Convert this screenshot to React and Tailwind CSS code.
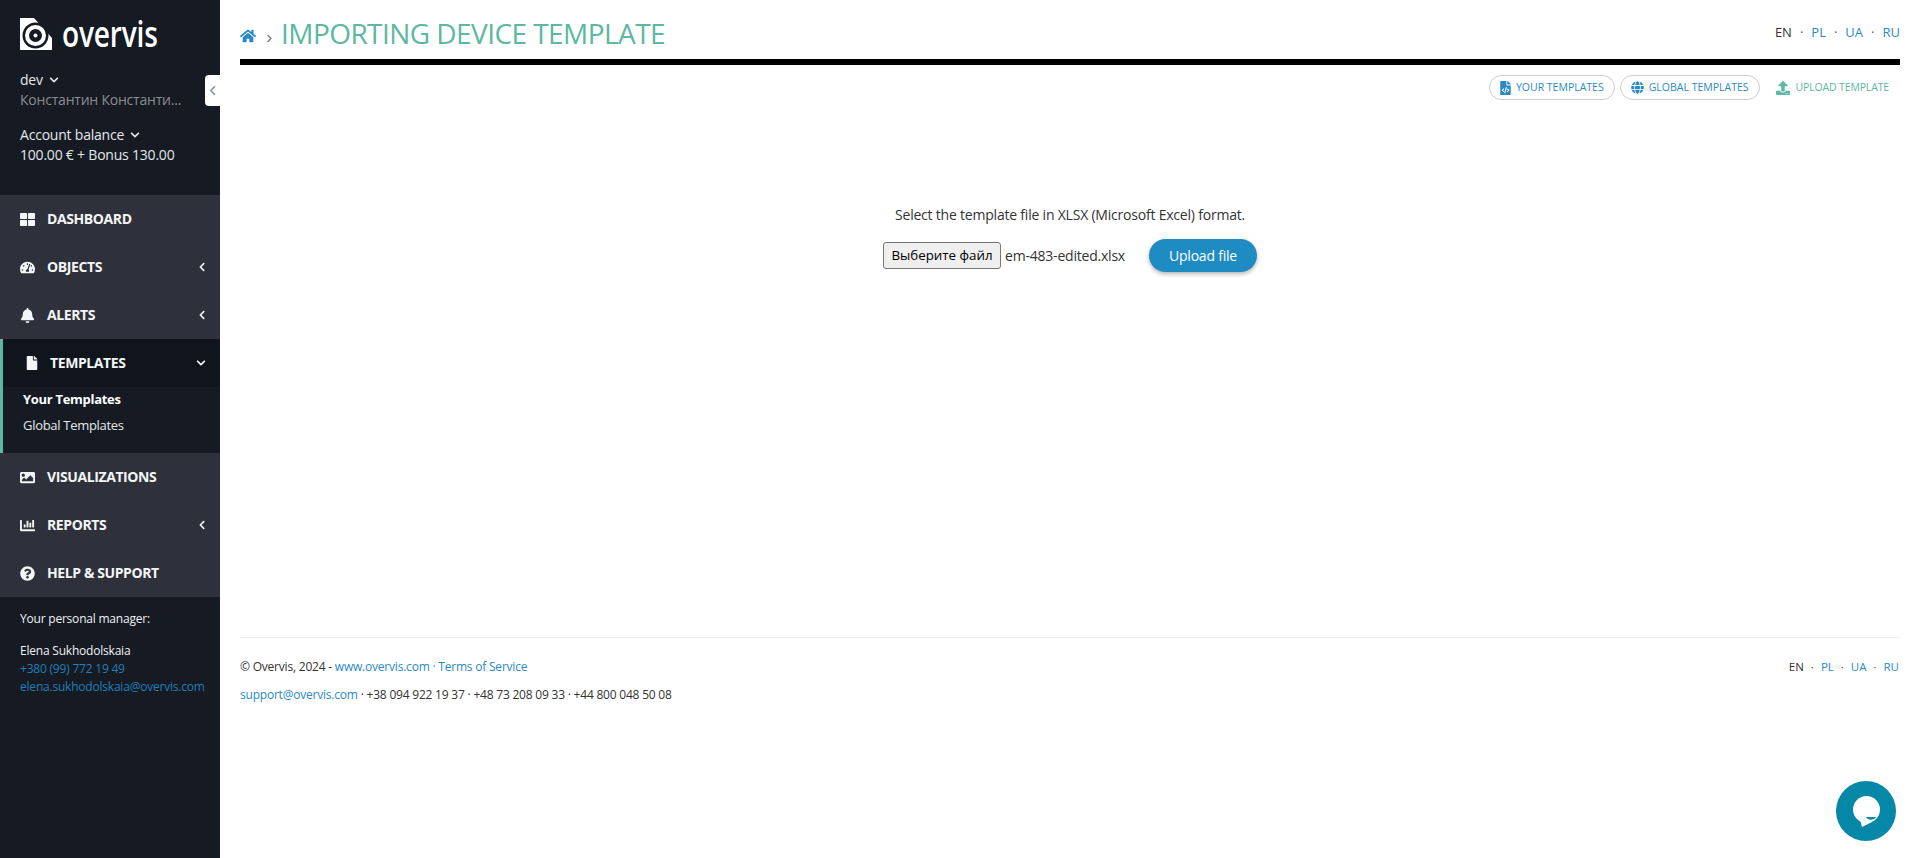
import React from 'react';
import {
  FaThLarge,
  FaTachometerAlt,
  FaBell,
  FaFile,
  FaImage,
  FaChartBar,
  FaQuestionCircle,
  FaHome,
  FaChevronDown,
  FaChevronLeft,
  FaChevronRight,
  FaFileCode,
  FaGlobe,
  FaUpload,
} from 'react-icons/fa';

const NavItem = ({ icon: Icon, label, arrow }) => (
  <div className="h-12 flex items-center pl-5 pr-[13px] text-[#f4f5f6]">
    <span className="w-[27px] flex items-center">
      <Icon className="text-[15px]" />
    </span>
    <span className="flex-1 text-sm font-bold uppercase tracking-[-0.4px]">{label}</span>
    {arrow && <FaChevronLeft className="text-[10px]" />}
  </div>
);

const Langs = ({ className, dotClass }) => (
  <div className={`flex items-center ${className}`}>
    <span className="text-[#333]">EN</span>
    <span className={`text-[#555] ${dotClass}`}>·</span>
    <a className="text-[#2a8ac6]">PL</a>
    <span className={`text-[#555] ${dotClass}`}>·</span>
    <a className="text-[#2a8ac6]">UA</a>
    <span className={`text-[#555] ${dotClass}`}>·</span>
    <a className="text-[#2a8ac6]">RU</a>
  </div>
);

const Logo = () => (
  <div className="flex items-center gap-[10px] text-white">
    <svg width="32" height="32" viewBox="0 0 32 32">
      <path d="M0 0H14L32 20V32H0Z" fill="#fff" />
      <circle cx="15.500" cy="17.500" r="13" fill="#151a23" />
      <circle cx="15.500" cy="17.500" r="10.500" fill="#fff" />
      <circle cx="15.500" cy="17.500" r="6.500" fill="#151a23" />
      <circle cx="15.500" cy="17.500" r="2" fill="#fff" />
    </svg>
    <span className="text-[36px] leading-8 font-semibold origin-left scale-x-[0.78]">overvis</span>
  </div>
);

const Sidebar = () => (
  <aside className="relative w-[220px] shrink-0 bg-[#151a23] text-sm text-[#e4e7ea]">
    <div className="h-[195px] pl-5 pt-[18px]">
      <Logo />
      <div className="mt-5 leading-5">
        <div className="flex items-center gap-[6px]">
          dev <FaChevronDown className="text-[10px]" />
        </div>
        <div className="text-[#8b8d90]">Константин Константи...</div>
      </div>
      <div className="mt-[15px] leading-5">
        <div className="flex items-center gap-[6px]">
          Account balance <FaChevronDown className="text-[10px]" />
        </div>
        <div>100.00 € + Bonus 130.00</div>
      </div>
    </div>

    <div className="absolute left-[205px] top-[75px] w-[15px] h-[31px] bg-white rounded-l flex items-center justify-center text-[#8c99a8]">
      <FaChevronLeft className="text-[11px]" />
    </div>

    <nav>
      <div className="bg-[#2e313b]">
        <NavItem icon={FaThLarge} label="Dashboard" />
        <NavItem icon={FaTachometerAlt} label="Objects" arrow />
        <NavItem icon={FaBell} label="Alerts" arrow />
      </div>
      <div className="border-l-[3px] border-[#5cb8a0]">
        <div className="h-12 flex items-center pl-[22px] pr-[14px] bg-[#10141c] text-[#f4f5f6]">
          <span className="w-[25px] flex items-center">
            <FaFile className="text-[14px]" />
          </span>
          <span className="flex-1 font-bold uppercase tracking-[-0.4px]">Templates</span>
          <FaChevronDown className="text-[10px]" />
        </div>
        <div className="h-[66px] flex flex-col pl-5 text-[13px] leading-[26px] tracking-[-0.3px]">
          <div className="-mt-px font-bold text-white">Your Templates</div>
          <div>Global Templates</div>
        </div>
      </div>
      <div className="bg-[#2e313b]">
        <NavItem icon={FaImage} label="Visualizations" />
        <NavItem icon={FaChartBar} label="Reports" arrow />
        <NavItem icon={FaQuestionCircle} label="Help & Support" />
      </div>
    </nav>

    <div className="pl-5 pt-[13px] text-xs leading-[18px] text-[#f0f1f2]">
      <div>Your personal manager:</div>
      <div className="mt-[14px]">Elena Sukhodolskaia</div>
      <a className="block text-[#1f7fba]">+380 (99) 772 19 49</a>
      <a className="block text-[#1f7fba]">elena.sukhodolskaia@overvis.com</a>
    </div>
  </aside>
);

const PillLink = ({ icon: Icon, iconClass, children }) => (
  <a className="h-[25px] flex items-center gap-[5px] px-[10px] rounded-full border border-[#ccc] text-[#2a8ac6] text-[10.5px] uppercase tracking-normal">
    <Icon className={`shrink-0 ${iconClass}`} />
    {children}
  </a>
);

export default function App() {
  return (
    <div className="min-h-screen flex bg-white text-[#333] font-['Open_Sans',sans-serif] tracking-[-0.21px]">
      <Sidebar />

      <main className="flex-1 min-w-0 pl-5 pr-[15px]">
        <header className="h-[59px] flex items-start justify-between pt-[19px]">
          <div className="flex items-end">
            <FaHome className="text-[#2a8ac6] text-[16px] mb-[3px]" />
            <FaChevronRight className="text-[#7c7f88] text-[9px] ml-[9px] mb-[4px]" />
            <h1 className="ml-[7px] text-[28px] leading-none text-[#5cb8a0] uppercase tracking-[-0.56px]">Importing device template</h1>
          </div>
          <Langs className="mt-1 h-5 text-[13px] tracking-normal" dotClass="mx-2" />
        </header>
        <div className="h-[6px] bg-black" />

        <div className="mt-[10px] flex items-center justify-end gap-[5px] pr-[11px]">
          <PillLink icon={FaFileCode} iconClass="w-[11px] h-[14px]">Your Templates</PillLink>
          <PillLink icon={FaGlobe} iconClass="text-[13px]">Global Templates</PillLink>
          <a className="ml-[11px] h-[25px] flex items-center gap-[6px] text-[#5cb8a0] text-[10.5px] uppercase tracking-[-0.15px]">
            <FaUpload className="text-[14px]" />
            Upload Template
          </a>
        </div>

        <section className="h-[538px] border-b border-[#eee] flex flex-col items-center pt-[105px]">
          <p className="text-sm leading-5">Select the template file in XLSX (Microsoft Excel) format.</p>
          <div className="mt-[14px] flex items-center">
            <button className="w-[118px] h-[27px] bg-[#efefef] border border-[#767676] rounded-[3px] text-[13.33px] text-black tracking-normal">
              Выберите файл
            </button>
            <span className="ml-1 w-[144px] text-sm">em-483-edited.xlsx</span>
            <button className="w-[108px] h-[33px] rounded-full bg-[#1f8bc3] text-white text-sm shadow-[0_2px_4px_rgba(0,0,0,0.3)]">
              Upload file
            </button>
          </div>
        </section>

        <footer className="pt-[15px] flex justify-between text-xs pr-px">
          <div className="leading-[28px]">
            <div>
              © Overvis, 2024 - <a className="text-[#2a8ac6]">www.overvis.com</a>
              <span className="text-[#2a8ac6]"> · </span>
              <a className="text-[#2a8ac6]">Terms of Service</a>
            </div>
            <div>
              <a className="text-[#2a8ac6]">support@overvis.com</a> · +38 094 922 19 37 · +48 73 208 09 33 · +44 800 048 50 08
            </div>
          </div>
          <Langs className="h-[28px] text-[11.5px] tracking-normal" dotClass="mx-[7px]" />
        </footer>
      </main>

      <div className="fixed right-[19px] bottom-[17px] w-[60px] h-[60px] rounded-full bg-[#0587a8] flex items-center justify-center">
        <svg width="27" height="31" viewBox="0 0 27 31">
          <circle cx="13.500" cy="13.500" r="13.500" fill="#fff" />
          <path d="M7 24L9 31L19 26Z" fill="#fff" />
          <path d="M13 21H23C21 24.500 15 24.500 13 21Z" fill="#0587a8" />
        </svg>
      </div>
    </div>
  );
}
